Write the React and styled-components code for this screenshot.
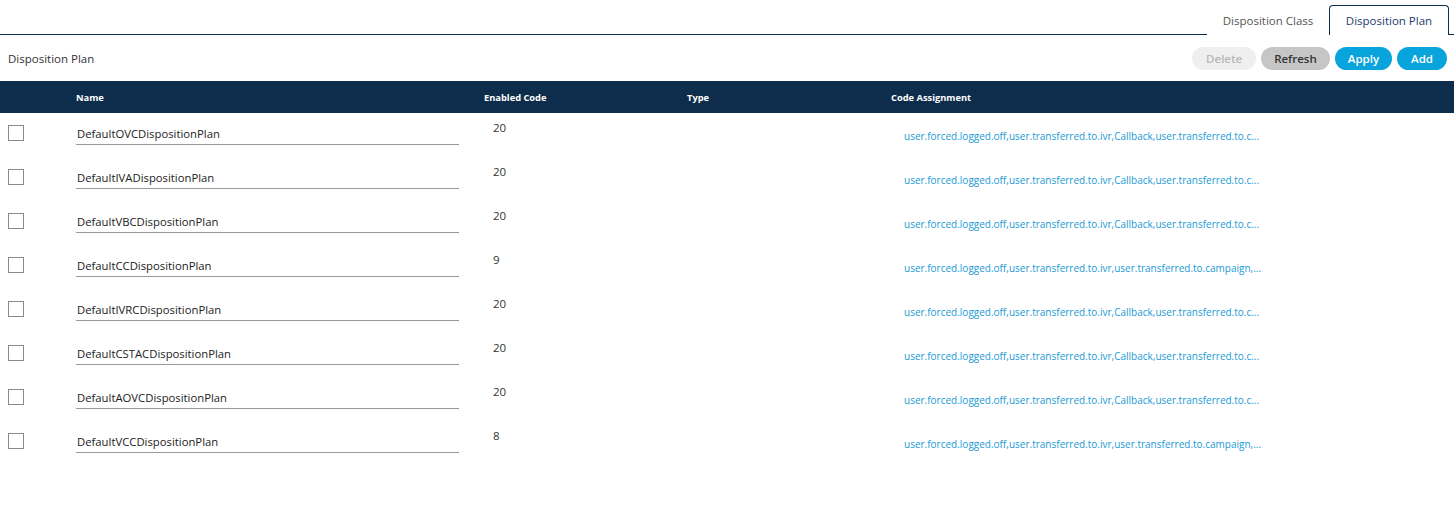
import React from 'react';
import styled, { createGlobalStyle } from 'styled-components';

const GlobalStyle = createGlobalStyle`
    body {
        margin: 0;
        background: #fff;
        font-family: "Open Sans", "Noto Sans", sans-serif;
        color: #333;
    }
`;

const Page = styled.div`
    width: 100%;
`;

const TabStrip = styled.div`
    display: flex;
    justify-content: flex-end;
    align-items: flex-end;
    height: 34px;
    border-bottom: 1px solid #0e2d4c;
    padding-right: 5px;
`;

const Tab = styled.div`
    height: 30px;
    box-sizing: border-box;
    width: ${p => p.$width}px;
    display: flex;
    align-items: center;
    justify-content: center;
    white-space: nowrap;
    font-size: 11.5px;
    margin-bottom: -1px;
    color: ${p => (p.$active ? '#1d3c6b' : '#555')};
    background: #fff;
    border: 1px solid ${p => (p.$active ? '#0e2d4c' : 'transparent')};
    border-bottom: none;
    border-radius: 4px 4px 0 0;
`;

const TitleBar = styled.div`
    display: flex;
    align-items: center;
    justify-content: space-between;
    height: 46px;
    padding: 0 7px 0 8px;
`;

const Title = styled.div`
    font-size: 11.5px;
    color: #333;
`;

const ButtonGroup = styled.div`
    display: flex;
    gap: 5px;
`;

const Button = styled.button`
    height: 23px;
    border: none;
    border-radius: 12px;
    padding: 0 ${p => p.$pad}px;
    font-family: "Open Sans", "Noto Sans", sans-serif;
    font-size: 11.5px;
    font-weight: 600;
    cursor: pointer;
    background: ${p => ({ disabled: '#efefef', gray: '#c6c6c6', blue: '#0aa4dc' }[p.$variant])};
    color: ${p => ({ disabled: '#b8b8b8', gray: '#333', blue: '#fff' }[p.$variant])};
`;

const Grid = styled.div`
    display: grid;
    grid-template-columns: 76px 408px 203px 204px 1fr;
`;

const HeaderRow = styled(Grid)`
    background: #0e2d4c;
    height: 32px;
    align-items: center;
`;

const HeaderCell = styled.div`
    color: #fff;
    font-size: 9.3px;
    font-weight: 700;
`;

const Row = styled(Grid)`
    height: 44px;
    align-items: start;
`;

const Check = styled.div`
    margin: 12px 0 0 8px;
    width: 16px;
    height: 16px;
    box-sizing: border-box;
    border: 1px solid #8a8a8a;
    background: #fff;
`;

const NameField = styled.div`
    width: 383px;
    box-sizing: border-box;
    padding: 13px 0 2px 1px;
    font-size: 11.3px;
    line-height: 16px;
    color: #222;
    border-bottom: 1px solid #9a9a9a;
`;

const CodeCount = styled.div`
    padding: 7px 0 0 9px;
    font-size: 11.5px;
    line-height: 16px;
    color: #333;
`;

const Assignment = styled.div`
    padding: 16px 0 0 13px;
    font-size: 10px;
    line-height: 14px;
    color: #1a9ad6;
    white-space: nowrap;
`;

const A = 'user.forced.logged.off,user.transferred.to.ivr,Callback,user.transferred.to.c...';
const B = 'user.forced.logged.off,user.transferred.to.ivr,user.transferred.to.campaign,...';

const plans = [
    { name: 'DefaultOVCDispositionPlan', count: 20, codes: A },
    { name: 'DefaultIVADispositionPlan', count: 20, codes: A },
    { name: 'DefaultVBCDispositionPlan', count: 20, codes: A },
    { name: 'DefaultCCDispositionPlan', count: 9, codes: B },
    { name: 'DefaultIVRCDispositionPlan', count: 20, codes: A },
    { name: 'DefaultCSTACDispositionPlan', count: 20, codes: A },
    { name: 'DefaultAOVCDispositionPlan', count: 20, codes: A },
    { name: 'DefaultVCCDispositionPlan', count: 8, codes: B },
];

const App = () => (
    <Page>
        <GlobalStyle />
        <TabStrip>
            <Tab $width={122}>Disposition Class</Tab>
            <Tab $active $width={120}>Disposition Plan</Tab>
        </TabStrip>
        <TitleBar>
            <Title>Disposition Plan</Title>
            <ButtonGroup>
                <Button $variant="disabled" $pad={14}>Delete</Button>
                <Button $variant="gray" $pad={13}>Refresh</Button>
                <Button $variant="blue" $pad={13}>Apply</Button>
                <Button $variant="blue" $pad={14}>Add</Button>
            </ButtonGroup>
        </TitleBar>
        <HeaderRow>
            <div />
            <HeaderCell>Name</HeaderCell>
            <HeaderCell>Enabled Code</HeaderCell>
            <HeaderCell>Type</HeaderCell>
            <HeaderCell>Code Assignment</HeaderCell>
        </HeaderRow>
        {plans.map(p => (
            <Row key={p.name}>
                <Check />
                <NameField>{p.name}</NameField>
                <CodeCount>{p.count}</CodeCount>
                <div />
                <Assignment>{p.codes}</Assignment>
            </Row>
        ))}
    </Page>
);

export default App;
